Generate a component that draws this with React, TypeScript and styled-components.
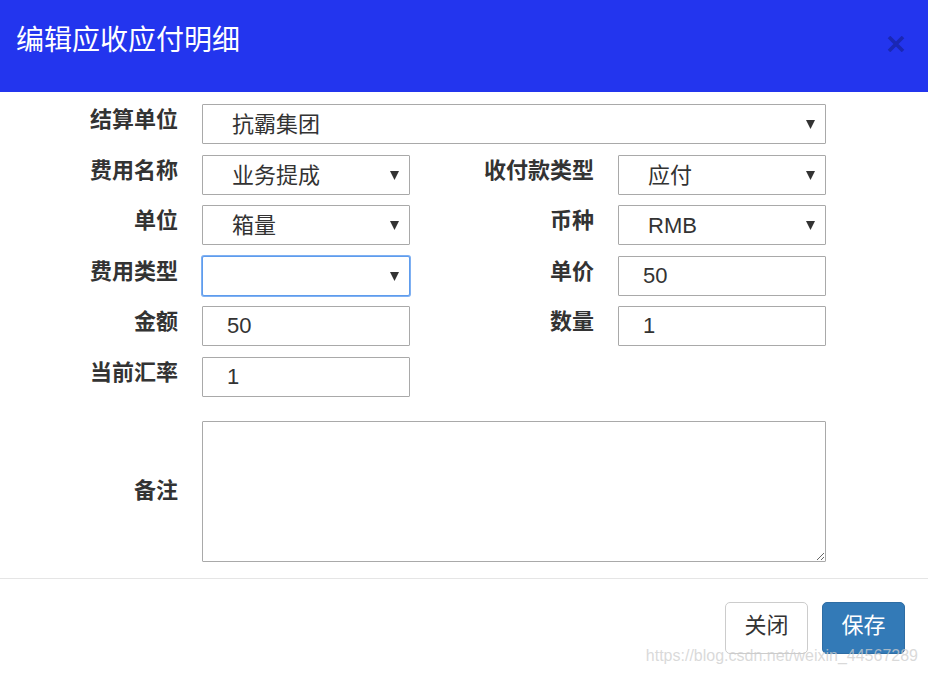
import React from "react";
import styled, { createGlobalStyle, css } from "styled-components";

const Global = createGlobalStyle`
  html, body { margin: 0; padding: 0; background: #ffffff; }
  body { font-family: "Liberation Sans", "Noto Sans CJK SC", sans-serif; color: #333; }
  * { box-sizing: border-box; }
`;

const Modal = styled.div`
  width: 928px;
  height: 673px;
  position: relative;
  display: flex;
  flex-direction: column;
  background: #fff;
  overflow: hidden;
`;

const Header = styled.div`
  height: 92px;
  flex: none;
  background: #2335ee;
  display: flex;
  align-items: flex-start;
  justify-content: space-between;
  padding: 24px 22px 0 16px;
`;

const Title = styled.h4`
  margin: 0;
  font-size: 28px;
  line-height: 34px;
  font-weight: normal;
  color: #ffffff;
`;

const CloseButton = styled.button`
  border: 0;
  background: transparent;
  padding: 0;
  margin-top: 11px;
  width: 20px;
  height: 18px;
  display: flex;
  align-items: center;
  justify-content: center;
  cursor: pointer;
`;

const Body = styled.div`
  padding: 12px 0 16px 18px;
  display: flex;
  flex-direction: column;
  gap: 10.6px;
`;

const Row = styled.div<{ $spaced?: boolean }>`
  display: grid;
  grid-template-columns: 160px 208px 160px 208px;
  column-gap: 24px;
  ${(p) => p.$spaced && css`margin-top: 13.4px;`}
`;

const Label = styled.label<{ $center?: boolean }>`
  font-size: 22px;
  line-height: 30px;
  font-weight: bold;
  color: #333;
  text-align: right;
  padding-top: 1px;
  white-space: nowrap;
  ${(p) => p.$center && css`align-self: center; padding-top: 0;`}
`;

const fieldBase = css<{ $focused?: boolean }>`
  width: 100%;
  height: 40px;
  margin: 0;
  border: 1px solid #a9a9a9;
  border-radius: 1px;
  background: #fff;
  font-family: "Liberation Sans", "Noto Sans CJK SC", sans-serif;
  font-size: 22px;
  color: #333;
  outline: none;
  ${(p) =>
    p.$focused &&
    css`
      border-color: #5e9ced;
      border-radius: 2px;
      box-shadow: 0 0 0 1px #7fb0f2;
    `}
`;

const SelectWrap = styled.div<{ $wide?: boolean }>`
  position: relative;
  ${(p) => p.$wide && css`grid-column: 2 / span 3;`}
`;

const Select = styled.select<{ $focused?: boolean }>`
  ${fieldBase};
  appearance: none;
  -webkit-appearance: none;
  padding: 1px 30px 0 29px;
  line-height: 38px;
`;

const Arrow = styled.svg`
  position: absolute;
  right: 11px;
  top: 16px;
  pointer-events: none;
`;

const Input = styled.input<{ $focused?: boolean }>`
  ${fieldBase};
  padding: 0 24px;
`;

const TextArea = styled.textarea`
  grid-column: 2 / span 3;
  height: 141px;
  border: 1px solid #a9a9a9;
  border-radius: 1px;
  resize: vertical;
  font-family: "Liberation Sans", "Noto Sans CJK SC", sans-serif;
  font-size: 22px;
  padding: 6px 12px;
  outline: none;
`;

const Footer = styled.div`
  border-top: 1px solid #e5e5e5;
  padding: 23px 23px 0 0;
  display: flex;
  justify-content: flex-end;
  gap: 14px;
`;

const Button = styled.button<{ $primary?: boolean }>`
  width: 83px;
  height: 52px;
  padding: 0 0 3px;
  border-radius: 5px;
  font-family: "Liberation Sans", "Noto Sans CJK SC", sans-serif;
  font-size: 22px;
  line-height: 26px;
  cursor: pointer;
  border: 1px solid #cccccc;
  background: #ffffff;
  color: #333333;
  ${(p) =>
    p.$primary &&
    css`
      background: #337ab7;
      border-color: #2e6da4;
      color: #ffffff;
    `}
`;

const Watermark = styled.div`
  position: absolute;
  right: 10px;
  bottom: 8px;
  font-family: "Liberation Sans", sans-serif;
  font-size: 16px;
  color: rgba(205, 205, 205, 0.75);
  pointer-events: none;
  white-space: nowrap;
`;

const DropArrow = () => (
  <Arrow width="9" height="9" viewBox="0 0 9 9">
    <polygon points="0,0 9,0 4.5,9" fill="#333" />
  </Arrow>
);

const Sel = ({ value, wide, focused }: { value: string; wide?: boolean; focused?: boolean }) => (
  <SelectWrap $wide={wide}>
    <Select $focused={focused} defaultValue={value}>
      <option value={value}>{value}</option>
    </Select>
    <DropArrow />
  </SelectWrap>
);

export default function App() {
  return (
    <>
      <Global />
      <Modal>
        <Header>
          <Title>编辑应收应付明细</Title>
          <CloseButton aria-label="close">
            <svg width="18" height="16" viewBox="0 0 18 16">
              <path d="M2 1 L16 15 M16 1 L2 15" stroke="#1a27b4" strokeWidth="3.6" strokeLinecap="butt" />
            </svg>
          </CloseButton>
        </Header>
        <Body>
          <Row>
            <Label>结算单位</Label>
            <Sel value="抗霸集团" wide />
          </Row>
          <Row>
            <Label>费用名称</Label>
            <Sel value="业务提成" />
            <Label>收付款类型</Label>
            <Sel value="应付" />
          </Row>
          <Row>
            <Label>单位</Label>
            <Sel value="箱量" />
            <Label>币种</Label>
            <Sel value="RMB" />
          </Row>
          <Row>
            <Label>费用类型</Label>
            <Sel value="" focused />
            <Label>单价</Label>
            <Input defaultValue="50" />
          </Row>
          <Row>
            <Label>金额</Label>
            <Input defaultValue="50" />
            <Label>数量</Label>
            <Input defaultValue="1" />
          </Row>
          <Row>
            <Label>当前汇率</Label>
            <Input defaultValue="1" />
          </Row>
          <Row $spaced>
            <Label $center>备注</Label>
            <TextArea />
          </Row>
        </Body>
        <Footer>
          <Button>关闭</Button>
          <Button $primary>保存</Button>
        </Footer>
        <Watermark>https://blog.csdn.net/weixin_44567289</Watermark>
      </Modal>
    </>
  );
}
